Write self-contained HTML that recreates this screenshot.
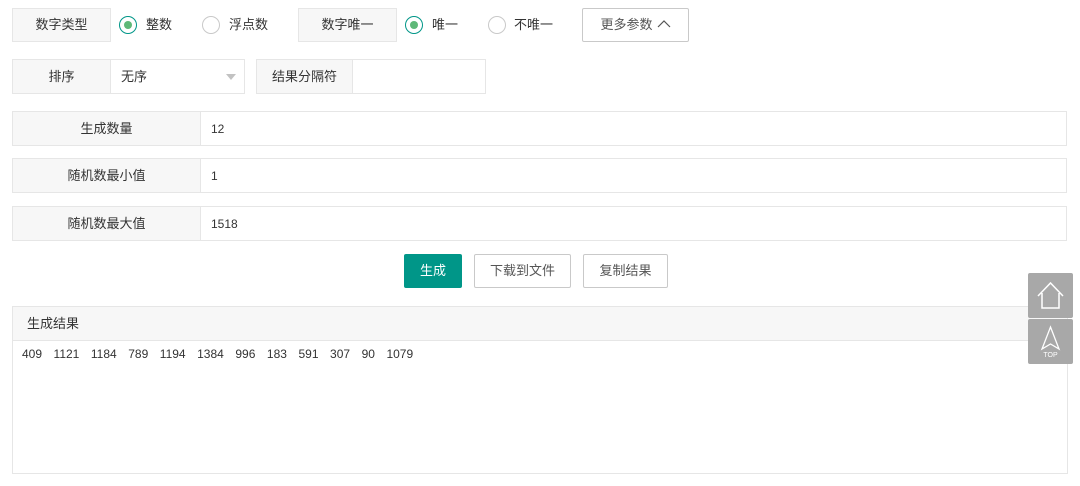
<!DOCTYPE html>
<html><head><meta charset="utf-8"><style>
body{margin:0;width:1080px;height:486px;background:#fff;font-family:"Liberation Sans","Noto Sans CJK SC",sans-serif;font-size:13px;color:#333;position:relative;overflow:hidden}
.a{position:absolute;box-sizing:border-box}
.lbl{background:#f7f7f7;border:1px solid #e6e6e6;display:flex;align-items:center;justify-content:center;padding-bottom:3px}
.inp{border:1px solid #e6e6e6;background:#fff;display:flex;align-items:center;padding-left:10px;padding-bottom:3px}
.num{padding-bottom:0;padding-top:1px;font-size:12px}
.rad{width:18px;height:18px;border:1px solid #c9c9c9;border-radius:50%;background:#fff}
.rad.on{border-color:#009688}
.rad.on::after{content:"";position:absolute;left:4px;top:4px;width:8px;height:8px;border-radius:50%;background:#5fb878}
.btn{border:1px solid #c9c9c9;background:#fff;display:flex;align-items:center;justify-content:center;color:#555;border-radius:2px;padding-bottom:3px}
.side{background:#a8a8a8;width:45px;height:45px;border-radius:2px}
</style></head><body>
<div class="a lbl" style="left:12px;top:8px;width:99px;height:34px">数字类型</div>
<div class="a rad on" style="left:119px;top:16px"></div><div class="a" style="left:146px;top:14px">整数</div>
<div class="a rad" style="left:202px;top:16px"></div><div class="a" style="left:229px;top:14px">浮点数</div>
<div class="a lbl" style="left:298px;top:8px;width:99px;height:34px">数字唯一</div>
<div class="a rad on" style="left:405px;top:16px"></div><div class="a" style="left:432px;top:14px">唯一</div>
<div class="a rad" style="left:488px;top:16px"></div><div class="a" style="left:514px;top:14px">不唯一</div>
<div class="a btn" style="left:582px;top:8px;width:107px;height:34px">更多参数 <svg width="14" height="10" style="margin-left:4px"><path d="M1 8L7 2L13 8" stroke="#555" fill="none" stroke-width="1.2"/></svg></div>

<div class="a lbl" style="left:12px;top:59px;width:99px;height:35px">排序</div>
<div class="a inp" style="left:110px;top:59px;width:135px;height:35px">无序<span style="position:absolute;right:8px;top:14px;border:5px solid transparent;border-top:6px solid #c2c2c2"></span></div>
<div class="a lbl" style="left:256px;top:59px;width:97px;height:35px">结果分隔符</div>
<div class="a inp" style="left:352px;top:59px;width:134px;height:35px"></div>

<div class="a lbl" style="left:12px;top:111px;width:189px;height:35px">生成数量</div>
<div class="a inp num" style="left:200px;top:111px;width:867px;height:35px">12</div>
<div class="a lbl" style="left:12px;top:158px;width:189px;height:35px">随机数最小值</div>
<div class="a inp num" style="left:200px;top:158px;width:867px;height:35px">1</div>
<div class="a lbl" style="left:12px;top:206px;width:189px;height:35px">随机数最大值</div>
<div class="a inp num" style="left:200px;top:206px;width:867px;height:35px">1518</div>

<div class="a btn" style="left:404px;top:254px;width:58px;height:34px;background:#009688;border-color:#009688;color:#fff">生成</div>
<div class="a btn" style="left:474px;top:254px;width:97px;height:34px">下载到文件</div>
<div class="a btn" style="left:583px;top:254px;width:85px;height:34px">复制结果</div>

<div class="a" style="left:12px;top:306px;width:1056px;height:168px;border:1px solid #e6e6e6">
<div style="height:33px;background:#f7f7f7;border-bottom:1px solid #e6e6e6;line-height:33px;padding-left:14px">生成结果</div>
<div style="padding:6px 0 0 9px;word-spacing:8.2px;font-size:12px">409 1121 1184 789 1194 1384 996 183 591 307 90 1079</div>
</div>

<div class="a side" style="left:1028px;top:273px"><svg width="45" height="45"><path d="M10 23L22.5 10L35 23M14 20V35H31V20" stroke="#fff" fill="none" stroke-width="1.5"/></svg></div>
<div class="a side" style="left:1028px;top:319px"><svg width="45" height="45"><path d="M22.5 8L31 30L22.5 25L14 30Z" stroke="#fff" fill="none" stroke-width="1.3"/><text x="22.5" y="38" font-size="7" fill="#fff" text-anchor="middle" font-family="Liberation Sans">TOP</text></svg></div>
</body></html>
